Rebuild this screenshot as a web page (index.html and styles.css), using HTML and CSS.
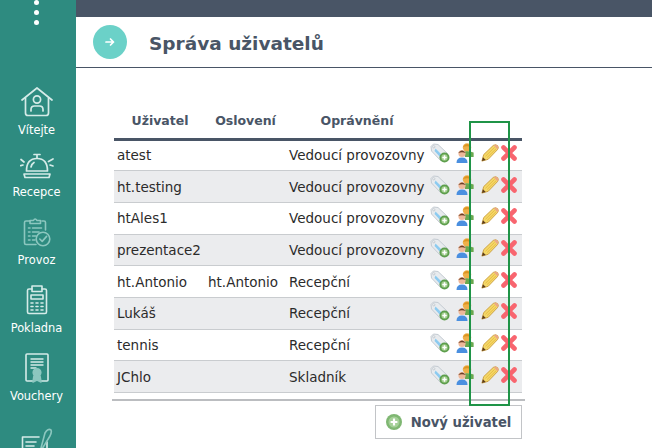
FILE: index.html
```html
<!DOCTYPE html>
<html lang="cs">
<head>
    <meta charset="UTF-8">
    <title>Správa uživatelů</title>
    <link rel="stylesheet" href="styles.css">
</head>
<body>
    <svg class="defs" width="0" height="0">
        <symbol id="i-tag" viewBox="0 0 20 20">
            <path d="M1 3.5 L3.5 1 L8 1.5 L18 11 L11 18 L1.5 8 Z" fill="#e8ebee" stroke="#c4cbd2" stroke-width="1"/>
            <path d="M5.5 5.5 L13 13 L11 15 L4.5 8 Z" fill="#8ccbf0"/>
            <circle cx="3.8" cy="3.8" r="1.1" fill="#fff" stroke="#aab2ba" stroke-width=".6"/>
            <circle cx="14.5" cy="14.5" r="5" fill="#5d9e4c"/>
            <circle cx="14.5" cy="14.5" r="3.2" fill="#9ecb8a"/>
            <path d="M14.5 12.3 V16.7 M12.3 14.5 H16.7" stroke="#fff" stroke-width="1.5"/>
        </symbol>
        <symbol id="i-users" viewBox="0 0 18 20">
            <circle cx="11" cy="4.5" r="4.2" fill="#eeb04a"/>
            <path d="M6.8 4 Q11 -2 15.2 4 Q11 2.4 6.8 4 Z" fill="#dc9420"/>
            <path d="M8 8.5 Q12 7.5 17.6 9.5 V14 H9 Z" fill="#6aa84f"/>
            <circle cx="6" cy="10.5" r="3.6" fill="#eeb89a"/>
            <path d="M2.2 10 Q6 4.8 9.8 10 Q6 8.4 2.2 10 Z" fill="#6b3d22"/>
            <path d="M.5 20 Q.5 14.5 6 14.5 Q11.5 14.5 11.5 20 Z" fill="#4a8fe0"/>
        </symbol>
        <symbol id="i-pencil" viewBox="0 0 20 20">
            <path d="M1 19 L3 11.8 L13.6 1.6 Q16.5 -.2 18.6 2 Q20 4.4 18.2 6.4 L8 17 Z" fill="#f4d868" stroke="#c99c3c" stroke-width="1"/>
            <path d="M5 13.6 L15.2 3.6 M6.8 15 L16.8 5.2" stroke="#e6b840" stroke-width="1"/>
            <path d="M14.2 1.4 Q16.5 -.2 18.6 2 Q20 4.4 18.4 6 Z" fill="#eaa886"/>
            <path d="M1 19 L2.2 14.8 L5.2 17.8 Z" fill="#5a3a1c"/>
        </symbol>
        <symbol id="i-cross" viewBox="0 0 16 16">
            <path d="M2.5 2.5 L13.5 13.5 M13.5 2.5 L2.5 13.5" stroke="#f8656f" stroke-width="4.6" stroke-linecap="round"/>
        </symbol>
    </svg>

    <nav class="sidebar">
        <div class="dots"><span></span><span></span><span></span></div>
        <a class="nav-item nav-first">
            <svg viewBox="0 0 32 30" fill="none" stroke="#d5ebe8" stroke-width="1.7" stroke-linejoin="round" stroke-linecap="round">
                <path d="M1 13 L16 1 L31 13"/>
                <path d="M4.5 11 V26 Q4.5 28.5 7 28.5 H25 Q27.5 28.5 27.5 26 V11"/>
                <circle cx="16" cy="12.5" r="3.6"/>
                <path d="M10 24 V22.5 Q10 19 13.5 19 H18.5 Q22 19 22 22.5 V24"/>
            </svg>
            <span>Vítejte</span>
        </a>
        <a class="nav-item nav-second">
            <svg viewBox="0 0 34 26" fill="none" stroke="#d5ebe8" stroke-width="1.7" stroke-linecap="round" stroke-linejoin="round">
                <path d="M14 1.5 H20 M17 1.5 V5"/>
                <path d="M6.5 18 Q6.5 5.5 17 5.5 Q27.5 5.5 27.5 18 Z"/>
                <path d="M11 14 Q11.5 11 14 9.5"/>
                <path d="M4 21 H30 L29 24.5 H5 Z"/>
                <path d="M1 6.5 L4 9 M3 12 L.8 12.6 M33 6 L28.5 8.5 M30 12 L33 13"/>
            </svg>
            <span>Recepce</span>
        </a>
        <a class="nav-item">
            <svg viewBox="0 0 28 30" fill="none" stroke="#8cc7bf" stroke-width="1.6" stroke-linecap="round" stroke-linejoin="round">
                <path d="M7 4 H3 Q1.5 4 1.5 5.5 V26 Q1.5 27.5 3 27.5 H13"/>
                <path d="M19 4 H21 Q22.5 4 22.5 5.5 V13"/>
                <path d="M7 6.5 V3.5 H10.5 Q12 .5 14 3.5 H17.5 V6.5 Z"/>
                <path d="M5.5 11 H7 M9.5 11 H18.5 M5.5 15 H7 M9.5 15 H16 M5.5 19 H7 M9.5 19 H13 M5.5 23 H7 M9.5 23 H12"/>
                <circle cx="20" cy="22" r="6.8"/>
                <path d="M16.8 22 L19.2 24.4 L23.6 19.4"/>
            </svg>
            <span>Provoz</span>
        </a>
        <a class="nav-item">
            <svg viewBox="0 0 22 30" fill="none" stroke="#d5ebe8" stroke-width="1.6" stroke-linecap="round" stroke-linejoin="round">
                <path d="M6 4 H3 Q1.5 4 1.5 5.5 V27 Q1.5 28.5 3 28.5 H19 Q20.5 28.5 20.5 27 V5.5 Q20.5 4 19 4 H16"/>
                <path d="M6 6.5 V1 H16 V6.5 Z"/>
                <rect x="5" y="10" width="12" height="4"/>
                <path d="M5 18 H7 M10 18 H12 M15 18 H17 M5 21.5 H7 M10 21.5 H12 M15 21.5 H17 M5 25 H7 M10 25 H12 M15 25 H17"/>
            </svg>
            <span>Pokladna</span>
        </a>
        <a class="nav-item">
            <svg viewBox="0 0 24 30" fill="none" stroke="#d5ebe8" stroke-width="1.6" stroke-linecap="round" stroke-linejoin="round">
                <path d="M8 28 H2 Q1 28 1 27 V2 Q1 1 2 1 H22 Q23 1 23 2 V27 Q23 28 22 28 H16"/>
                <path d="M6 6 H18 M6 9 H18 M6 12 H18 M6 15 H11" stroke-width="1.4"/>
                <circle cx="12" cy="19.5" r="3.8" fill="#8cc7bf" stroke="#8cc7bf"/>
                <path d="M9 23 L8 29 L12 27 L16 29 L15 23" fill="#8cc7bf" stroke="#8cc7bf"/>
            </svg>
            <span>Vouchery</span>
        </a>
        <a class="nav-item nav-last">
            <svg viewBox="0 0 32 30" fill="none" stroke="#d5ebe8" stroke-width="1.6" stroke-linecap="round" stroke-linejoin="round">
                <path d="M18 9 H1.5 V28 H26 V14"/>
                <path d="M5 14 H15 M5 18 H13"/>
                <path d="M20 20 L24 5 Q27 0 30 2 Q31 4 29 8 L21 21 Z" stroke="#8cc7bf"/>
            </svg>
        </a>
    </nav>

    <div class="main">
        <div class="topbar"></div>
        <header class="page-head">
            <div class="round-btn">
                <svg viewBox="0 0 10 10" width="10" height="10" fill="none" stroke="#fff" stroke-width="1.7" stroke-linecap="round" stroke-linejoin="round">
                    <path d="M1 5 H8.5 M5.5 2 L8.5 5 L5.5 8"/>
                </svg>
            </div>
            <h1>Správa uživatelů</h1>
        </header>

        <section class="content">
            <table class="users">
                <colgroup>
                    <col class="c-user"><col class="c-name"><col class="c-role"><col class="c-act">
                </colgroup>
                <thead>
                    <tr><th>Uživatel</th><th>Oslovení</th><th>Oprávnění</th><th></th></tr>
                </thead>
                <tbody>
                    <tr><td>atest</td><td></td><td>Vedoucí provozovny</td><td class="acts"><svg class="ic-tag"><use href="#i-tag"/></svg><svg class="ic-users"><use href="#i-users"/></svg><svg class="ic-pencil"><use href="#i-pencil"/></svg><svg class="ic-cross"><use href="#i-cross"/></svg></td></tr>
                    <tr><td>ht.testing</td><td></td><td>Vedoucí provozovny</td><td class="acts"><svg class="ic-tag"><use href="#i-tag"/></svg><svg class="ic-users"><use href="#i-users"/></svg><svg class="ic-pencil"><use href="#i-pencil"/></svg><svg class="ic-cross"><use href="#i-cross"/></svg></td></tr>
                    <tr><td>htAles1</td><td></td><td>Vedoucí provozovny</td><td class="acts"><svg class="ic-tag"><use href="#i-tag"/></svg><svg class="ic-users"><use href="#i-users"/></svg><svg class="ic-pencil"><use href="#i-pencil"/></svg><svg class="ic-cross"><use href="#i-cross"/></svg></td></tr>
                    <tr><td>prezentace2</td><td></td><td>Vedoucí provozovny</td><td class="acts"><svg class="ic-tag"><use href="#i-tag"/></svg><svg class="ic-users"><use href="#i-users"/></svg><svg class="ic-pencil"><use href="#i-pencil"/></svg><svg class="ic-cross"><use href="#i-cross"/></svg></td></tr>
                    <tr><td>ht.Antonio</td><td>ht.Antonio</td><td>Recepční</td><td class="acts"><svg class="ic-tag"><use href="#i-tag"/></svg><svg class="ic-users"><use href="#i-users"/></svg><svg class="ic-pencil"><use href="#i-pencil"/></svg><svg class="ic-cross"><use href="#i-cross"/></svg></td></tr>
                    <tr><td>Lukáš</td><td></td><td>Recepční</td><td class="acts"><svg class="ic-tag"><use href="#i-tag"/></svg><svg class="ic-users"><use href="#i-users"/></svg><svg class="ic-pencil"><use href="#i-pencil"/></svg><svg class="ic-cross"><use href="#i-cross"/></svg></td></tr>
                    <tr><td>tennis</td><td></td><td>Recepční</td><td class="acts"><svg class="ic-tag"><use href="#i-tag"/></svg><svg class="ic-users"><use href="#i-users"/></svg><svg class="ic-pencil"><use href="#i-pencil"/></svg><svg class="ic-cross"><use href="#i-cross"/></svg></td></tr>
                    <tr><td>JChlo</td><td></td><td>Skladník</td><td class="acts"><svg class="ic-tag"><use href="#i-tag"/></svg><svg class="ic-users"><use href="#i-users"/></svg><svg class="ic-pencil"><use href="#i-pencil"/></svg><svg class="ic-cross"><use href="#i-cross"/></svg></td></tr>
                </tbody>
            </table>
            <div class="table-foot">
                <button class="new-user" type="button">
                    <svg viewBox="0 0 16 16" width="16" height="16">
                        <circle cx="8" cy="8" r="8" fill="#7fb772"/>
                        <circle cx="8" cy="8" r="5.5" fill="#a5d098"/>
                        <path d="M8 4.6 V11.4 M4.6 8 H11.4" stroke="#fff" stroke-width="2.2"/>
                    </svg>
                    Nový uživatel
                </button>
            </div>
            <div class="highlight"></div>
        </section>
    </div>
</body>
</html>
```

FILE: styles.css
```css
* {
    box-sizing: border-box;
}

html, body {
    height: 100%;
}

body {
    margin: 0;
    display: flex;
    overflow: hidden;
    background: #fff;
    color: #2b2b2b;
    font-family: 'DejaVu Sans', sans-serif;
}

.defs {
    position: absolute;
}

/* left menu */
.sidebar {
    width: 76px;
    flex-shrink: 0;
    height: 448px;
    overflow: hidden;
    padding-right: 3px;
    background: #2e8b80;
    color: #fff;
    text-align: center;
}

.dots {
    display: flex;
    flex-direction: column;
    align-items: center;
    gap: 5px;
    height: 85px;
}

.dots span {
    width: 5px;
    height: 5px;
    border-radius: 50%;
    background: #fff;
}

.nav-item {
    display: flex;
    flex-direction: column;
    align-items: center;
    justify-content: flex-end;
    height: 68px;
    font-size: 11.4px;
    line-height: 14px;
    padding-bottom: 1px;
    gap: 6px;
}

.nav-first {
    height: 53px;
}

.nav-second {
    height: 62px;
}

.nav-last {
    justify-content: flex-start;
    padding-top: 24px;
}

.nav-item svg {
    height: 30px;
    width: 34px;
    flex-shrink: 0;
}

.nav-second svg {
    height: 26px;
}

/* main */
.main {
    flex: 1;
    min-width: 0;
}

.topbar {
    height: 17px;
    background: #495566;
}

.page-head {
    height: 51px;
    display: flex;
    align-items: center;
    padding-left: 17px;
    border-bottom: 1px solid #495566;
}

.round-btn {
    width: 34px;
    height: 34px;
    border-radius: 50%;
    background: #6bd1c8;
    display: flex;
    align-items: center;
    justify-content: center;
    margin-right: 22px;
}

h1 {
    margin: 0;
    padding-top: 2px;
    font-size: 18.5px;
    font-weight: 700;
    color: #495566;
}

.content {
    position: relative;
    padding: 37px 0 0 38px;
}

.users {
    width: 408px;
    table-layout: fixed;
    border-collapse: collapse;
    font-size: 13.5px;
}

.c-user { width: 92px; }
.c-name { width: 79px; }
.c-role { width: 144px; }
.c-act { width: 93px; }

.users th {
    height: 34px;
    padding: 0 0 2px;
    font-size: 12.5px;
    font-weight: 700;
    text-align: center;
    color: #495566;
    border-bottom: 3px solid #495566;
}

.users td {
    height: 31.7px;
    padding: 0 0 0 3px;
    white-space: nowrap;
    border-bottom: 1px solid #c9cccf;
}

.users tbody td:nth-child(2) {
    padding-left: 2px;
}

.users tbody td:nth-child(3) {
    padding-left: 4px;
}

.users tbody tr:nth-child(even) td {
    background: #ebecee;
}

.users td.acts {
    padding: 0 0 4px 1px;
    font-size: 0;
    white-space: nowrap;
}

.acts svg {
    display: inline-block;
    vertical-align: middle;
}

.ic-tag { width: 20px; height: 20px; margin-right: 6px; }
.ic-users { width: 18px; height: 20px; margin-right: 7px; }
.ic-pencil { width: 18px; height: 18px; margin-right: 2px; }
.ic-cross { width: 16px; height: 16px; }

.table-foot {
    width: 413px;
    margin: 6px 0 0 -2px;
    padding-right: 3px;
    border-top: 2px solid #bbbdc0;
    display: flex;
    justify-content: flex-end;
    padding-top: 4px;
}

.new-user {
    width: 147px;
    height: 34px;
    display: flex;
    align-items: center;
    justify-content: center;
    gap: 9px;
    padding: 0;
    background: #fff;
    border: 1px solid #c2c4c7;
    font-family: inherit;
    font-size: 13.2px;
    font-weight: 700;
    color: #495566;
}

/* green frame drawn over the table */
.highlight {
    position: absolute;
    left: 393px;
    top: 53px;
    width: 41px;
    height: 285px;
    border: 2px solid #1f9447;
}
```
